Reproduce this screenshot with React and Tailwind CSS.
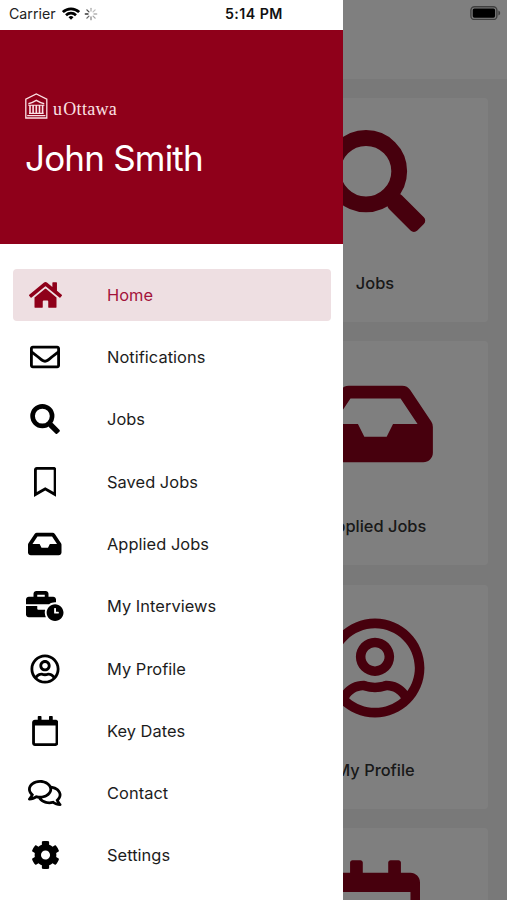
import {
    FaBusinessTime,
    FaCog,
    FaHome,
    FaInbox,
    FaRegBookmark,
    FaRegComments,
    FaRegEnvelope
} from "react-icons/fa";

const MENU = [
    { label: "Home", icon: FaHome, size: "w-[33px]", active: true },
    { label: "Notifications", icon: FaRegEnvelope, size: "w-[30px]" },
    { label: "Jobs", icon: MagnifierIcon, size: "w-[30px]" },
    { label: "Saved Jobs", icon: FaRegBookmark, size: "w-[22.5px]" },
    { label: "Applied Jobs", icon: FaInbox, size: "w-[33.5px]" },
    { label: "My Interviews", icon: FaBusinessTime, size: "w-[37.5px]" },
    { label: "My Profile", icon: ProfileIcon, size: "w-[30px]" },
    { label: "Key Dates", icon: CalendarIcon, size: "w-[26.5px]" },
    { label: "Contact", icon: FaRegComments, size: "w-[33.5px]" },
    { label: "Settings", icon: FaCog, size: "w-[29px]" }
];

const CARDS = [
    { label: "Jobs", icon: MagnifierIcon, size: "w-[102px]" },
    { label: "Applied Jobs", icon: FaInbox, size: "w-[115px]" },
    { label: "My Profile", icon: ProfileIcon, size: "w-[102px]" },
    { icon: CalendarIcon, size: "w-[89px]" }
];

function ProfileIcon({ className }) {
    return (
        <svg viewBox="-8 0 512 512" fill="currentColor" className={className}>
            <path d="M248 104c-53 0-96 43-96 96s43 96 96 96 96-43 96-96-43-96-96-96zm0 144c-26.5 0-48-21.5-48-48s21.5-48 48-48 48 21.5 48 48-21.5 48-48 48zm0-240C111 8 0 119 0 256s111 248 248 248 248-111 248-248S385 8 248 8zm0 448c-49.7 0-95.1-18.3-130.1-48.4 14.9-23 40.4-38.6 69.6-39.5 20.8 6.4 40.6 9.6 60.5 9.6s39.7-3.1 60.5-9.6c29.2 1 54.7 16.5 69.6 39.5-35 30.1-80.4 48.4-130.1 48.4zm162.7-84.1c-24.4-31.4-62.1-51.9-105.1-51.9-10.2 0-26 9.6-57.6 9.6-31.5 0-47.4-9.6-57.6-9.6-42.9 0-80.6 20.5-105.1 51.9C61.9 339.2 48 299.2 48 256c0-110.3 89.7-200 200-200s200 89.7 200 200c0 43.2-13.9 83.2-37.3 115.9z" />
        </svg>
    );
}

function CalendarIcon({ className }) {
    return (
        <svg viewBox="0 0 448 512" fill="currentColor" className={className}>
            <path d="M400 64h-48V12c0-6.6-5.4-12-12-12h-40c-6.6 0-12 5.4-12 12v52H160V12c0-6.6-5.4-12-12-12h-40c-6.6 0-12 5.4-12 12v52H48C21.5 64 0 85.5 0 112v352c0 26.5 21.5 48 48 48h352c26.5 0 48-21.5 48-48V112c0-26.5-21.5-48-48-48zm-6 400H54c-3.3 0-6-2.7-6-6V160h352v298c0 3.3-2.7 6-6 6z" />
        </svg>
    );
}

function MagnifierIcon({ className }) {
    return (
        <svg viewBox="0 0 102 102" className={className}>
            <circle cx="42" cy="41.2" r="33.2" fill="none" stroke="currentColor" strokeWidth="15.8" />
            <rect
                x="-20.2"
                y="-9.4"
                width="40.4"
                height="18.8"
                rx="4.8"
                fill="currentColor"
                transform="translate(82.3 83) rotate(45)"
            />
        </svg>
    );
}

function WifiIcon() {
    return (
        <svg viewBox="0 0 18 13" className="h-[13px] w-[18px]" fill="none" stroke="black" strokeWidth="2.7">
            <path d="M.9 5.1a11.6 11.6 0 0 1 16.2 0" />
            <path d="M4 8.2a7.3 7.3 0 0 1 10 0" />
            <path d="M9 12.8 6.5 10.2a3.6 3.6 0 0 1 5 0z" fill="black" stroke="none" />
        </svg>
    );
}

function Spinner() {
    return (
        <svg viewBox="-7 -7 14 14" className="h-[14px] w-[14px]" stroke="black" strokeWidth="1.3" strokeLinecap="round">
            <path d="M0-3v-2.7" opacity=".3" />
            <path d="M2.1-2.1l2-2" opacity=".25" />
            <path d="M3 0h2.7" opacity=".3" />
            <path d="M2.1 2.1l2 2" opacity=".35" />
            <path d="M0 3v2.7" opacity=".45" />
            <path d="M-2.1 2.1l-2 2" opacity=".6" />
            <path d="M-3 0h-2.7" opacity=".8" />
            <path d="M-2.1-2.1l-2-2" opacity=".7" />
        </svg>
    );
}

function Battery() {
    return (
        <svg viewBox="0 0 31 14" className="h-[14px] w-[31px]">
            <rect x="0.9" y="0.7" width="26" height="12.8" rx="3.6" fill="none" stroke="black" strokeOpacity=".5" strokeWidth="1.4" />
            <rect x="2.7" y="2.5" width="22.4" height="9.2" rx="1.6" fill="black" />
            <path d="M28.4 4.6c2.4.8 2.4 4.2 0 5z" fill="black" fillOpacity=".5" />
        </svg>
    );
}

function Logo() {
    return (
        <div className="flex h-[27px] items-end text-[#fbe0e4]">
            <svg viewBox="0 0 23 26" className="h-[26px] w-[23px]" fill="none" stroke="currentColor" strokeWidth="1.3">
                <path d="M.8 25V6.2L11.3 1l10.5 5.2V25z" />
                <path d="M3.4 10.8c2.6-.6 5.2-1.8 7.9-3.4 2.7 1.6 5.3 2.8 7.9 3.4" strokeWidth="1.4" />
                <path d="M3.2 12.2h16.2M4 20.4h14.6M2.2 22.6h18.2" strokeWidth="1.1" />
                <path d="M5 12v8.5M8.1 12v8.5M11.3 12v8.5M14.5 12v8.5M17.6 12v8.5" strokeWidth="1.6" />
            </svg>
            <span className="ml-[5px] font-['Liberation_Serif',serif] text-[18px] leading-[19px] tracking-[0.3px]">
                u<span className="ml-px">Ottawa</span>
            </span>
        </div>
    );
}

function Card({ label, icon: Icon, size }) {
    return (
        <div className="flex h-[224px] w-[226px] shrink-0 flex-col items-center rounded bg-white pt-8">
            <Icon className={`h-[102px] text-[#8f001a] ${size}`} />
            {label && <p className="mt-[39px] text-[16.4px] leading-6 font-medium text-[#333]">{label}</p>}
        </div>
    );
}

function Drawer() {
    return (
        <aside className="absolute inset-y-0 left-0 w-[343px] bg-white">
            <div className="flex h-[30px] items-center pb-[3px] pl-[9px]">
                <span className="w-[53px] text-[14.2px] leading-5 text-[#222]">Carrier</span>
                <WifiIcon />
                <span className="ml-1">
                    <Spinner />
                </span>
                <span className="ml-[127px] text-[14.2px] leading-5 font-semibold tracking-[0.45px] whitespace-nowrap text-[#111]">
                    5:14 PM
                </span>
            </div>

            <header className="h-[214px] bg-[#8f001a] pt-[62px] pl-[25px]">
                <Logo />
                <h1 className="mt-[17px] text-[35px] leading-[44px] tracking-[-0.8px] text-white">John Smith</h1>
            </header>

            <nav className="flex flex-col gap-[9.8px] pt-[24.5px] pr-3 pl-[13px]">
                {MENU.map(({ label, icon: Icon, size, active }) => (
                    <a
                        key={label}
                        className={`flex h-[52.5px] items-center rounded ${active ? "bg-[#eedfe2] text-[#a3123a]" : "text-[#1c1c1c]"}`}
                    >
                        <span className={`flex w-16 justify-center ${active ? "text-[#8f001a]" : "text-black"}`}>
                            <Icon className={`h-[30px] shrink-0 ${size}`} />
                        </span>
                        <span className="ml-[30px] text-[16.4px] leading-6 tracking-[0.05px]">{label}</span>
                    </a>
                ))}
            </nav>
        </aside>
    );
}

function App() {
    return (
        <div className="relative h-[900px] w-[507px] overflow-hidden bg-[#f2f2f2] font-[Inter,sans-serif] text-black">
            <div className="flex h-[79px] justify-end bg-white pt-[6px] pr-[6px]">
                <Battery />
            </div>
            <main className="flex flex-col items-end gap-[19.3px] pt-[19px] pr-[19px]">
                {CARDS.map((card, i) => (
                    <Card key={i} {...card} />
                ))}
            </main>
            <div className="absolute inset-0 bg-black/50" />
            <Drawer />
        </div>
    );
}

export default App;
